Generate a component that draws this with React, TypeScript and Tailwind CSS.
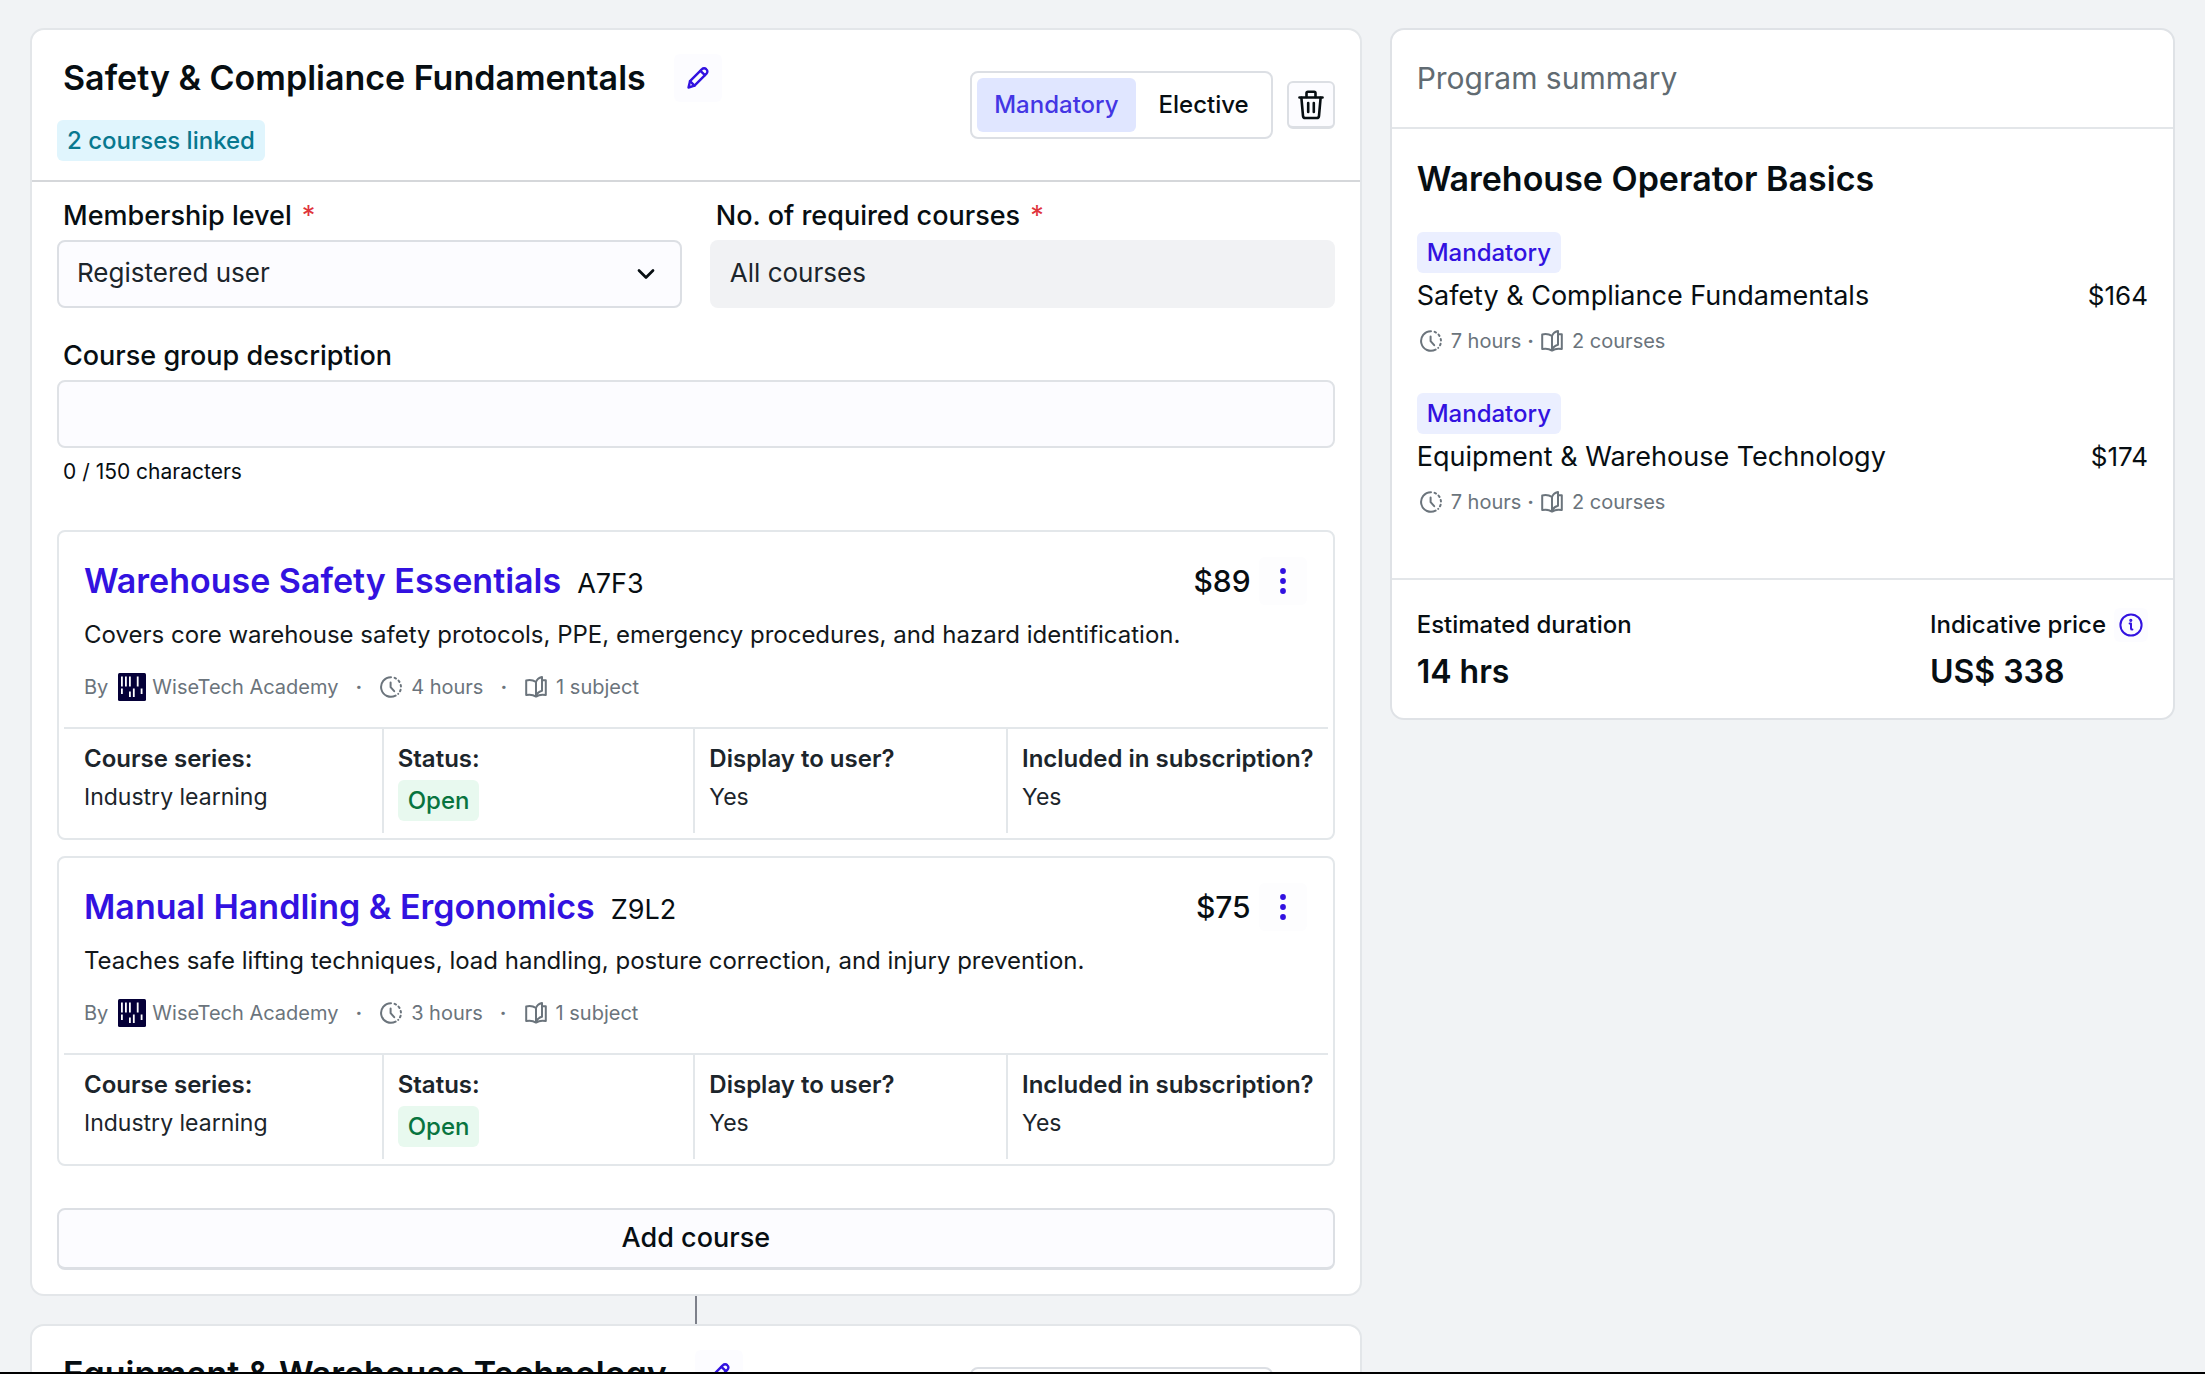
import { useId, useState } from 'react';
import type { ReactNode } from 'react';
import clsx from 'clsx';

interface Course {
  title: string;
  code: string;
  price: string;
  description: string;
  hours: string;
  subjects: string;
}

interface SummaryItem {
  title: string;
  price: string;
  hours: string;
  courses: string;
}

const COURSES: Course[] = [
  {
    title: 'Warehouse Safety Essentials',
    code: 'A7F3',
    price: '$89',
    description: 'Covers core warehouse safety protocols, PPE, emergency procedures, and hazard identification.',
    hours: '4 hours',
    subjects: '1 subject',
  },
  {
    title: 'Manual Handling & Ergonomics',
    code: 'Z9L2',
    price: '$75',
    description: 'Teaches safe lifting techniques, load handling, posture correction, and injury prevention.',
    hours: '3 hours',
    subjects: '1 subject',
  },
];

const SUMMARY: SummaryItem[] = [
  { title: 'Safety & Compliance Fundamentals', price: '$164', hours: '7 hours', courses: '2 courses' },
  { title: 'Equipment & Warehouse Technology', price: '$174', hours: '7 hours', courses: '2 courses' },
];

const MAX_DESCRIPTION = 150;

/* ---------- Icons ---------- */

function PencilIcon() {
  return (
    <svg viewBox="0 0 24 24" className="size-6" fill="none" stroke="currentColor" strokeWidth="2.4" strokeLinecap="round" strokeLinejoin="round" aria-hidden="true">
      <path d="M2.5 21.5 4 15.2 16 3.2a2.9 2.9 0 0 1 4.2 0l.3.3a2.9 2.9 0 0 1 0 4.2l-12 12z" />
      <path d="m14.5 4.8 4.4 4.4M4 15.2l4.5 4.5" />
    </svg>
  );
}

function TrashIcon() {
  return (
    <svg viewBox="0 0 28 30" className="h-[30px] w-7" fill="none" stroke="currentColor" strokeWidth="2.6" strokeLinecap="round" strokeLinejoin="round" aria-hidden="true">
      <path d="M2.5 7.5h23" />
      <path d="M9.5 7V3.2c0-.8.5-1.4 1.4-1.4h6.2c.9 0 1.4.6 1.4 1.4V7" />
      <path d="M4.4 7.8 6 25.8c.1 1.3 1 2.2 2.3 2.2h11.4c1.3 0 2.2-.9 2.3-2.2l1.6-18" />
      <path d="M11.2 13v9M16.8 13v9" />
    </svg>
  );
}

function ChevronIcon() {
  return (
    <svg viewBox="0 0 20 20" className="size-5" fill="none" stroke="currentColor" strokeWidth="2.7" strokeLinecap="round" strokeLinejoin="round" aria-hidden="true">
      <path d="m3 6.5 7 7 7-7" />
    </svg>
  );
}

function ClockIcon() {
  return (
    <svg viewBox="0 0 24 24" className="size-6" fill="none" stroke="currentColor" strokeWidth="2" strokeLinecap="round" strokeLinejoin="round" aria-hidden="true">
      <path d="M12 2.2a9.8 9.8 0 1 0 4.6 18.4" />
      <path d="M15.6 2.9a9.8 9.8 0 0 1 3.6 16" strokeDasharray="1.6 3.2" />
      <path d="M11.6 7.6v4.6l3.6 4" />
    </svg>
  );
}

function BookIcon() {
  return (
    <svg viewBox="0 0 24 24" className="size-6" fill="none" stroke="currentColor" strokeWidth="2" strokeLinejoin="round" aria-hidden="true">
      <path d="M2.2 5.4C6 4.6 9.4 5.2 12 7v14.6c-2.6-1.8-6-2.4-9.8-1.6z" />
      <path d="M12 7c.8-2.3 2.8-4.2 6-5v13.8c-3.2.8-5.2 2.8-6 5.8" />
      <path d="M18 5.2h3.8V20c-3.8-.8-7.2-.2-9.8 1.6" />
    </svg>
  );
}

function InfoIcon() {
  return (
    <svg viewBox="0 0 24 24" className="size-6" fill="none" stroke="currentColor" strokeWidth="2" strokeLinecap="round" strokeLinejoin="round" aria-hidden="true">
      <circle cx="12" cy="12" r="10.6" />
      <path d="M10.6 10.6H12v4.8c0 .8.4 1.2 1.4 1.2" />
      <circle cx="11.8" cy="7.3" r="0.6" fill="currentColor" />
    </svg>
  );
}

function KebabIcon() {
  return (
    <svg viewBox="0 0 6 28" className="h-7 w-1.5" fill="currentColor" aria-hidden="true">
      <circle cx="3" cy="4" r="2.9" />
      <circle cx="3" cy="14" r="2.9" />
      <circle cx="3" cy="24" r="2.9" />
    </svg>
  );
}

function AcademyLogo() {
  return (
    <svg viewBox="0 0 28 28" className="size-7" aria-hidden="true">
      <rect width="28" height="28" rx="1.5" fill="#050038" />
      <g fill="#fff">
        <rect x="3" y="3.5" width="1.8" height="10" />
        <rect x="7" y="3.5" width="1.8" height="10" />
        <rect x="11" y="3.5" width="1.8" height="10" />
        <rect x="18.8" y="3.5" width="1.8" height="10" />
        <rect x="3" y="15.5" width="1.8" height="5.5" />
        <rect x="11" y="18.5" width="1.8" height="5.5" />
        <rect x="14.9" y="15.5" width="1.8" height="8.5" />
        <rect x="22.7" y="15.5" width="1.8" height="5.5" />
      </g>
    </svg>
  );
}

/* ---------- Building blocks ---------- */

const BADGE_TONES = {
  info: 'bg-[#e0f5fd] text-[#08788f]',
  success: 'bg-[#e8f9ef] text-[#08743f]',
  primary: 'bg-[#ebefff] text-[#3212e0]',
};

function Badge({ tone, children }: { tone: keyof typeof BADGE_TONES; children: ReactNode }) {
  return (
    <span className={clsx('flex h-[41px] w-fit items-center rounded-md px-2.5 text-[24px] font-medium', BADGE_TONES[tone])}>
      {children}
    </span>
  );
}

function FieldLabel({ htmlFor, required, children }: { htmlFor: string; required?: boolean; children: ReactNode }) {
  return (
    <label htmlFor={htmlFor} className="mb-1.5 block pl-1.5 text-[27px] leading-9 font-medium">
      {children}
      {required && <span className="pl-2.5 font-normal text-[#e0343c]">*</span>}
    </label>
  );
}

function GroupHeader({ title, linked }: { title: string; linked: string }) {
  const [type, setType] = useState('Mandatory');

  return (
    <header className="flex items-center justify-between border-b-2 border-[#d5d7da] px-[25px]">
      <div className="pt-6 pb-[19px]">
        <div className="mb-[18px] flex items-center gap-7 pl-1.5">
          <h2 className="text-[34px] leading-[48px] font-semibold">{title}</h2>
          <button type="button" aria-label="Edit group name" className="flex size-12 items-center justify-center rounded-md bg-[#fcfcff] text-[#3212e0]">
            <PencilIcon />
          </button>
        </div>
        <Badge tone="info">{linked}</Badge>
      </div>
      <div className="flex items-center gap-3.5">
        <div className="flex gap-1.5 rounded-lg border-2 border-[#dcdfe4] p-[5px]">
          {['Mandatory', 'Elective'].map((option) => (
            <button
              key={option}
              type="button"
              aria-pressed={type === option}
              onClick={() => setType(option)}
              className={clsx(
                'h-[54px] rounded-md px-[17px] text-[24px] font-medium',
                type === option && 'bg-[#e0e6ff] text-[#4436e4]',
              )}
            >
              {option}
            </button>
          ))}
        </div>
        <button type="button" aria-label="Delete group" className="flex size-12 items-center justify-center rounded-md border-2 border-b-[3px] border-[#dcdfe4] bg-[#fcfcff]">
          <TrashIcon />
        </button>
      </div>
    </header>
  );
}

function Fact({ label, children }: { label: string; children: ReactNode }) {
  return (
    <div className="border-l-2 border-[#e3e7ea] px-3.5 pt-[15px] pb-3 text-[#1c252b] first:border-l-0 first:pl-5">
      <dt className="mb-1.5 text-[24px] leading-[30px] font-semibold whitespace-nowrap">{label}</dt>
      <dd className="text-[23px] leading-[34px]">{children}</dd>
    </div>
  );
}

function CourseCard({ course }: { course: Course }) {
  return (
    <article className="rounded-lg border-2 border-[#e3e7ea] px-[5px] pt-[25px] pb-[5px]">
      <div className="pr-[21px] pl-5">
        <div className="flex h-12 items-center justify-between">
          <div className="flex items-baseline gap-4">
            <h3 className="text-[34px] leading-[48px] font-semibold">
              <a href="#course" className="text-[#3212e0]">{course.title}</a>
            </h3>
            <span className="text-[27px]">{course.code}</span>
          </div>
          <div className="flex items-center gap-2">
            <span className="text-[30px] font-medium">{course.price}</span>
            <button type="button" aria-label="Course actions" className="flex size-12 items-center justify-center rounded-md bg-[#fdfdfe] text-[#3212e0]">
              <KebabIcon />
            </button>
          </div>
        </div>
        <p className="mt-3.5 text-[24px] leading-8 text-[#12171a]">{course.description}</p>
        <div className="mt-[22px] flex h-7 items-center text-[20px] text-[#6b747c]">
          <span className="pr-2.5">By</span>
          <AcademyLogo />
          <span className="pl-1.5">WiseTech Academy</span>
          <span className="px-[17px] font-bold">·</span>
          <ClockIcon />
          <span className="pl-2">{course.hours}</span>
          <span className="px-[17px] font-bold">·</span>
          <BookIcon />
          <span className="pl-2">{course.subjects}</span>
        </div>
      </div>
      <dl className="mt-[26px] grid grid-cols-[318fr_312fr_313fr_320fr] border-t-2 border-[#e3e7ea]">
        <Fact label="Course series:">Industry learning</Fact>
        <Fact label="Status:">
          <Badge tone="success">Open</Badge>
        </Fact>
        <Fact label="Display to user?">Yes</Fact>
        <Fact label="Included in subscription?">Yes</Fact>
      </dl>
    </article>
  );
}

function CourseGroup() {
  const id = useId();
  const [level, setLevel] = useState('Registered user');
  const [description, setDescription] = useState('');

  return (
    <section className="rounded-[14px] border-2 border-[#e3e6e9] bg-white">
      <GroupHeader title="Safety & Compliance Fundamentals" linked="2 courses linked" />
      <div className="px-[25px] pt-4 pb-6">
        <div className="grid grid-cols-2 gap-7">
          <div>
            <FieldLabel htmlFor={`${id}-level`} required>Membership level</FieldLabel>
            <div className="relative">
              <select
                id={`${id}-level`}
                value={level}
                onChange={(e) => setLevel(e.target.value)}
                className="h-[68px] w-full appearance-none rounded-lg border-2 border-[#dcdfe4] bg-[#fcfcff] pr-14 pb-1 pl-[18px] text-[26px] text-[#1c252b]"
              >
                <option>Registered user</option>
                <option>Member</option>
              </select>
              <span className="pointer-events-none absolute inset-y-0 right-[26px] flex items-center">
                <ChevronIcon />
              </span>
            </div>
          </div>
          <div>
            <FieldLabel htmlFor={`${id}-required`} required>No. of required courses</FieldLabel>
            <input
              id={`${id}-required`}
              type="text"
              readOnly
              value="All courses"
              className="h-[68px] w-full rounded-lg bg-[#f1f2f4] px-5 pb-1 text-[26px] text-[#1c252b]"
            />
          </div>
        </div>

        <div className="mt-[30px]">
          <FieldLabel htmlFor={`${id}-description`}>Course group description</FieldLabel>
          <input
            id={`${id}-description`}
            type="text"
            maxLength={MAX_DESCRIPTION}
            value={description}
            onChange={(e) => setDescription(e.target.value)}
            className="h-[68px] w-full rounded-lg border-2 border-[#dfe2e6] bg-[#fcfcff] px-5 text-[26px]"
          />
          <p className="mt-2.5 pl-1.5 text-[21px] leading-7">
            {description.length} / {MAX_DESCRIPTION} characters
          </p>
        </div>

        <div className="mt-11 flex flex-col gap-4">
          {COURSES.map((course) => (
            <CourseCard key={course.code} course={course} />
          ))}
        </div>

        <button type="button" className="mt-[42px] h-[62px] w-full rounded-lg border-2 border-b-[3px] border-[#dcdfe4] bg-[#fcfcff] text-[27px] font-medium">
          Add course
        </button>
      </div>
    </section>
  );
}

function ProgramSummary() {
  return (
    <aside className="rounded-[14px] border-2 border-[#dfe2e6] bg-white">
      <h2 className="border-b-2 border-[#e3e6e9] px-[25px] py-7 text-[30px] leading-[41px] text-[#616b72]">Program summary</h2>
      <div className="px-[25px] pt-7 pb-[62px]">
        <h3 className="text-[34px] leading-[44px] font-semibold">Warehouse Operator Basics</h3>
        <ul className="mt-[31px] flex flex-col gap-[38px]">
          {SUMMARY.map((item) => (
            <li key={item.title}>
              <Badge tone="primary">Mandatory</Badge>
              <div className="mt-[5px] flex justify-between leading-9">
                <span className="text-[27px]">{item.title}</span>
                <span className="text-[26px]">{item.price}</span>
              </div>
              <div className="mt-[13px] flex h-7 items-center pl-0.5 text-[20px] text-[#6b747c]">
                <ClockIcon />
                <span className="pl-2">{item.hours}</span>
                <span className="px-1.5 font-bold">·</span>
                <BookIcon />
                <span className="pl-2">{item.courses}</span>
              </div>
            </li>
          ))}
        </ul>
      </div>
      <div className="flex justify-between border-t-2 border-[#e3e6e9] px-[25px] pt-7 pb-6">
        <div>
          <p className="text-[24px] leading-[34px] font-medium">Estimated duration</p>
          <p className="mt-2 text-[32px] leading-[44px] font-semibold">14 hrs</p>
        </div>
        <div>
          <div className="flex items-center gap-2">
            <p className="text-[24px] leading-[34px] font-medium">Indicative price</p>
            <button type="button" aria-label="About the indicative price" className="flex size-[34px] items-center justify-center rounded-md bg-[#fcfcff] text-[#3212e0]">
              <InfoIcon />
            </button>
          </div>
          <p className="mt-2 text-[32px] leading-[44px] font-semibold">US$ 338</p>
        </div>
      </div>
    </aside>
  );
}

export default function App() {
  return (
    <div className="flex h-screen flex-col overflow-hidden bg-white font-['Inter',sans-serif] text-[#070e12]">
      <main className="grid min-h-0 flex-1 grid-cols-[39fr_23fr] items-start gap-7 overflow-hidden border-b-2 border-black bg-[#f1f3f5] px-[30px] pt-7">
        <div>
          <CourseGroup />
          <div className="mx-auto h-7 w-0.5 bg-[#7d808a]" />
          <section className="rounded-[14px] border-2 border-[#e3e6e9] bg-white">
            <GroupHeader title="Equipment & Warehouse Technology" linked="2 courses linked" />
          </section>
        </div>
        <ProgramSummary />
      </main>
      <div className="h-1.5 shrink-0" />
    </div>
  );
}
